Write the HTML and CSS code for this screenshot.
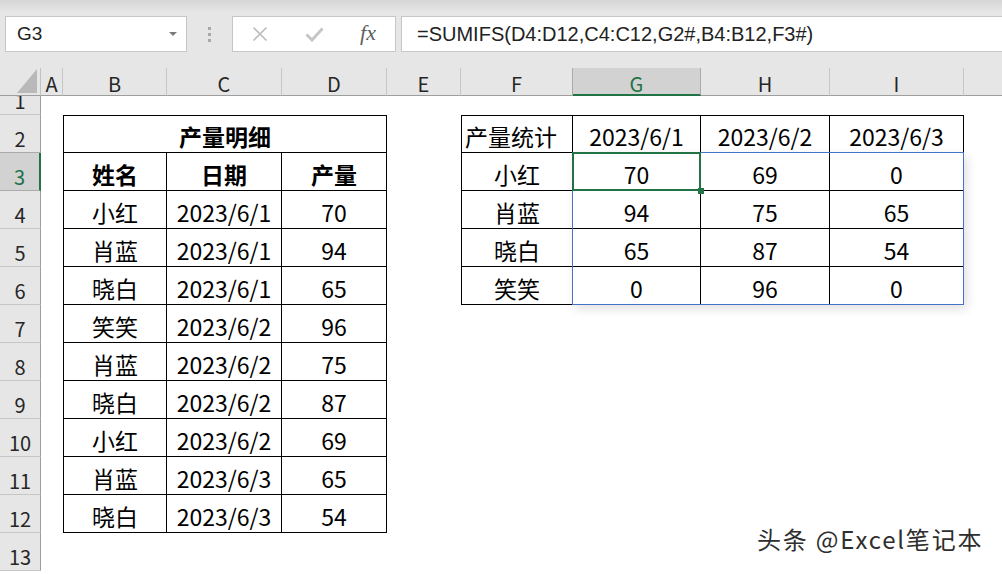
FILE: index.html
```html
<!DOCTYPE html>
<html lang="zh-CN">
    <head>
        <meta charset="UTF-8" />
        <meta name="viewport" content="width=device-width, initial-scale=1.0" />
        <title>SUMIFS</title>
        <link rel="stylesheet" href="styles.css">
    </head>
    <body>
        <div class="toolbar">
            <div class="namebox"><span class="val">G3</span><span class="arrow"></span></div>
            <div class="grip"><i></i><i></i><i></i></div>
            <div class="fxbox">
                <span class="slot">
                    <svg width="16" height="16" viewBox="0 0 16 16"><path d="M1.5 1.5 L14.5 14.5 M14.5 1.5 L1.5 14.5" stroke="#bcbcbc" stroke-width="1.6" fill="none"/></svg>
                </span>
                <span class="slot">
                    <svg width="19" height="15" viewBox="0 0 19 15"><path d="M1.5 7.5 L7 13 L17.5 1.5" stroke="#c6c6c6" stroke-width="3" fill="none"/></svg>
                </span>
                <span class="slot fx">fx</span>
            </div>
            <div class="formula">=SUMIFS(D4:D12,C4:C12,G2#,B4:B12,F3#)</div>
        </div>

        <div class="wrap">
        <div class="sheet">
            <!-- column headers -->
            <div class="corner"><span class="tri"></span></div>
            <div class="ch">A</div><div class="ch">B</div><div class="ch">C</div><div class="ch">D</div><div class="ch">E</div>
            <div class="ch">F</div><div class="ch sel">G</div><div class="ch">H</div><div class="ch">I</div><div class="ch end"></div>

            <!-- row 1 (short row, number is clipped like in Excel) -->
            <div class="rh r1">1</div>
            <div class="c"></div><div class="c"></div><div class="c"></div><div class="c"></div><div class="c"></div>
            <div class="c"></div><div class="c"></div><div class="c"></div><div class="c"></div><div class="c"></div>

            <!-- row 2 -->
            <div class="rh">2</div>
            <div class="c"></div>
            <div class="c t tl tt b span3">产量明细</div>
            <div class="c"></div>
            <div class="c t tl tt left">产量统计</div>
            <div class="c t tt">2023/6/1</div><div class="c t tt">2023/6/2</div><div class="c t tt">2023/6/3</div>
            <div class="c"></div>

            <!-- row 3 -->
            <div class="rh sel">3</div>
            <div class="c"></div>
            <div class="c t tl b">姓名</div><div class="c t b">日期</div><div class="c t b">产量</div>
            <div class="c"></div>
            <div class="c t tl">小红</div><div class="c t">70</div><div class="c t">69</div><div class="c t">0</div>
            <div class="c"></div>

            <!-- row 4 -->
            <div class="rh">4</div>
            <div class="c"></div>
            <div class="c t tl">小红</div><div class="c t">2023/6/1</div><div class="c t">70</div>
            <div class="c"></div>
            <div class="c t tl">肖蓝</div><div class="c t">94</div><div class="c t">75</div><div class="c t">65</div>
            <div class="c"></div>

            <!-- row 5 -->
            <div class="rh">5</div>
            <div class="c"></div>
            <div class="c t tl">肖蓝</div><div class="c t">2023/6/1</div><div class="c t">94</div>
            <div class="c"></div>
            <div class="c t tl">晓白</div><div class="c t">65</div><div class="c t">87</div><div class="c t">54</div>
            <div class="c"></div>

            <!-- row 6 -->
            <div class="rh">6</div>
            <div class="c"></div>
            <div class="c t tl">晓白</div><div class="c t">2023/6/1</div><div class="c t">65</div>
            <div class="c"></div>
            <div class="c t tl">笑笑</div><div class="c t">0</div><div class="c t">96</div><div class="c t">0</div>
            <div class="c"></div>

            <!-- rows 7-12 -->
            <div class="rh">7</div>
            <div class="c"></div>
            <div class="c t tl">笑笑</div><div class="c t">2023/6/2</div><div class="c t">96</div>
            <div class="c"></div><div class="c"></div><div class="c"></div><div class="c"></div><div class="c"></div><div class="c"></div>

            <div class="rh">8</div>
            <div class="c"></div>
            <div class="c t tl">肖蓝</div><div class="c t">2023/6/2</div><div class="c t">75</div>
            <div class="c"></div><div class="c"></div><div class="c"></div><div class="c"></div><div class="c"></div><div class="c"></div>

            <div class="rh">9</div>
            <div class="c"></div>
            <div class="c t tl">晓白</div><div class="c t">2023/6/2</div><div class="c t">87</div>
            <div class="c"></div><div class="c"></div><div class="c"></div><div class="c"></div><div class="c"></div><div class="c"></div>

            <div class="rh">10</div>
            <div class="c"></div>
            <div class="c t tl">小红</div><div class="c t">2023/6/2</div><div class="c t">69</div>
            <div class="c"></div><div class="c"></div><div class="c"></div><div class="c"></div><div class="c"></div><div class="c"></div>

            <div class="rh">11</div>
            <div class="c"></div>
            <div class="c t tl">肖蓝</div><div class="c t">2023/6/3</div><div class="c t">65</div>
            <div class="c"></div><div class="c"></div><div class="c"></div><div class="c"></div><div class="c"></div><div class="c"></div>

            <div class="rh">12</div>
            <div class="c"></div>
            <div class="c t tl">晓白</div><div class="c t">2023/6/3</div><div class="c t">54</div>
            <div class="c"></div><div class="c"></div><div class="c"></div><div class="c"></div><div class="c"></div><div class="c"></div>

            <!-- row 13 -->
            <div class="rh">13</div>
            <div class="c"></div><div class="c"></div><div class="c"></div><div class="c"></div><div class="c"></div>
            <div class="c"></div><div class="c"></div><div class="c"></div><div class="c"></div><div class="c"></div>
        </div>

        <!-- spill range G3# and active cell, on a grid laid over the sheet -->
        <div class="layer">
            <div class="spill"></div>
            <div class="active"><span class="handle"></span></div>
        </div>
        </div>

        <div class="mark">头条 @Excel笔记本</div>
    </body>
</html>
```

FILE: styles.css
```css
body {
    margin: 0;
    width: 1002px;
    height: 574px;
    overflow: hidden;
    position: relative;
    background-color: #fff;
    font-family: "Noto Sans CJK SC", sans-serif;
    color: #000;
}

/* formula bar */
.toolbar {
    height: 68px;
    box-sizing: border-box;
    padding: 16px 0 0 5px;
    display: flex;
    align-items: flex-start;
    background: linear-gradient(#d5d5d5, #e6e6e6 12px);
}
.namebox {
    width: 182px;
    height: 36px;
    box-sizing: border-box;
    border: 1px solid #c6c6c6;
    background-color: #fff;
    display: flex;
    align-items: center;
    padding: 0 9px 0 11px;
    font: 19px "Liberation Sans", sans-serif;
    color: #222;
}
.namebox .val {
    flex: 1;
}
.arrow {
    width: 0;
    height: 0;
    border-left: 4px solid transparent;
    border-right: 4px solid transparent;
    border-top: 4px solid #7a7a7a;
}
.grip {
    width: 45px;
    height: 36px;
    display: flex;
    flex-direction: column;
    align-items: center;
    justify-content: center;
    gap: 3px;
}
.grip i {
    width: 3px;
    height: 3px;
    background-color: #a8a8a8;
}
.fxbox {
    width: 164px;
    height: 36px;
    box-sizing: border-box;
    border: 1px solid #c6c6c6;
    background-color: #fff;
    display: flex;
}
.slot {
    flex: 1;
    display: flex;
    align-items: center;
    justify-content: center;
}
.fx {
    font: italic 22px "Liberation Serif", serif;
    color: #5e5e5e;
    padding-bottom: 2px;
}
.formula {
    flex: 1;
    height: 36px;
    box-sizing: border-box;
    margin: 0 -2px 0 5px;
    border: 1px solid #c6c6c6;
    background-color: #fff;
    padding-left: 15px;
    display: flex;
    align-items: center;
    font: 20px "Liberation Sans", sans-serif;
    color: #222;
}

/* sheet grid */
.wrap {
    display: grid;
    height: 506px;
    overflow: hidden;
}
.sheet, .layer {
    grid-area: 1 / 1;
    display: grid;
    grid-template-columns: 41px 22px 104px 115px 105px 74px 112px 128px 129px 134px 1fr;
    grid-template-rows: 28px 19px repeat(13, 38px);
}
.layer {
    pointer-events: none;
}
.corner, .ch, .rh {
    background-color: #e6e6e6;
    box-sizing: border-box;
    font-size: 20px;
    line-height: 1;
    color: #262626;
    display: flex;
    justify-content: center;
    align-items: flex-end;
}
.corner {
    border-right: 1px solid #c2c2c2;
    border-bottom: 1px solid #9e9e9e;
    padding: 0 3px 2px 0;
    justify-content: flex-end;
}
.tri {
    width: 0;
    height: 0;
    border-left: 20px solid transparent;
    border-bottom: 24px solid #b9b9b9;
}
.ch {
    border-right: 1px solid #c6c6c6;
    border-bottom: 1px solid #9e9e9e;
    padding-bottom: 1px;
}
.ch.sel {
    background-color: #d2d2d2;
    border-right-color: #ababab;
    border-bottom: 2px solid #217346;
    box-shadow: -1px 0 #ababab;
    color: #217346;
    padding-bottom: 0;
}
.ch.end {
    border-right: none;
}
.rh {
    border-right: 1px solid #9e9e9e;
    border-bottom: 1px solid #c6c6c6;
    padding-bottom: 3px;
}
.rh.r1 {
    overflow: hidden;
}
.rh.sel {
    background-color: #d2d2d2;
    border-right: 2px solid #217346;
    border-bottom-color: #ababab;
    box-shadow: 0 -1px #ababab;
    color: #217346;
}

/* cells */
.c {
    background-color: #fff;
    box-sizing: border-box;
    font-size: 23px;
    line-height: 1;
    white-space: nowrap;
    display: flex;
    justify-content: center;
    align-items: flex-end;
    padding-bottom: 4px;
}
.t {
    border-right: 1px solid #000;
    border-bottom: 1px solid #000;
}
.tl {
    border-left: 1px solid #000;
}
.tt {
    border-top: 1px solid #000;
}
.b {
    font-weight: bold;
}
.left {
    justify-content: flex-start;
    padding-left: 3px;
}
.span3 {
    grid-column: span 3;
}

/* overlays */
.spill {
    grid-column: 8 / 11;
    grid-row: 4 / 8;
    margin: -1px 0 0 -1px;
    border: 1px solid #4472c4;
    box-shadow: 3px 4px 10px rgba(0, 0, 0, 0.12);
}
.active {
    grid-column: 8;
    grid-row: 4;
    margin: -1px 0 0 -1px;
    border: 2px solid #217346;
    position: relative;
}
.handle {
    position: absolute;
    right: -5px;
    bottom: -5px;
    width: 6px;
    height: 6px;
    background-color: #217346;
}

.mark {
    position: absolute;
    left: 757px;
    top: 527px;
    font-size: 24px;
    line-height: 1;
    letter-spacing: 1.8px;
    color: #2e2e2e;
    text-shadow: 1px 1px 0 #fff, -1px 0 1px rgba(255, 255, 255, 0.8);
}
```
